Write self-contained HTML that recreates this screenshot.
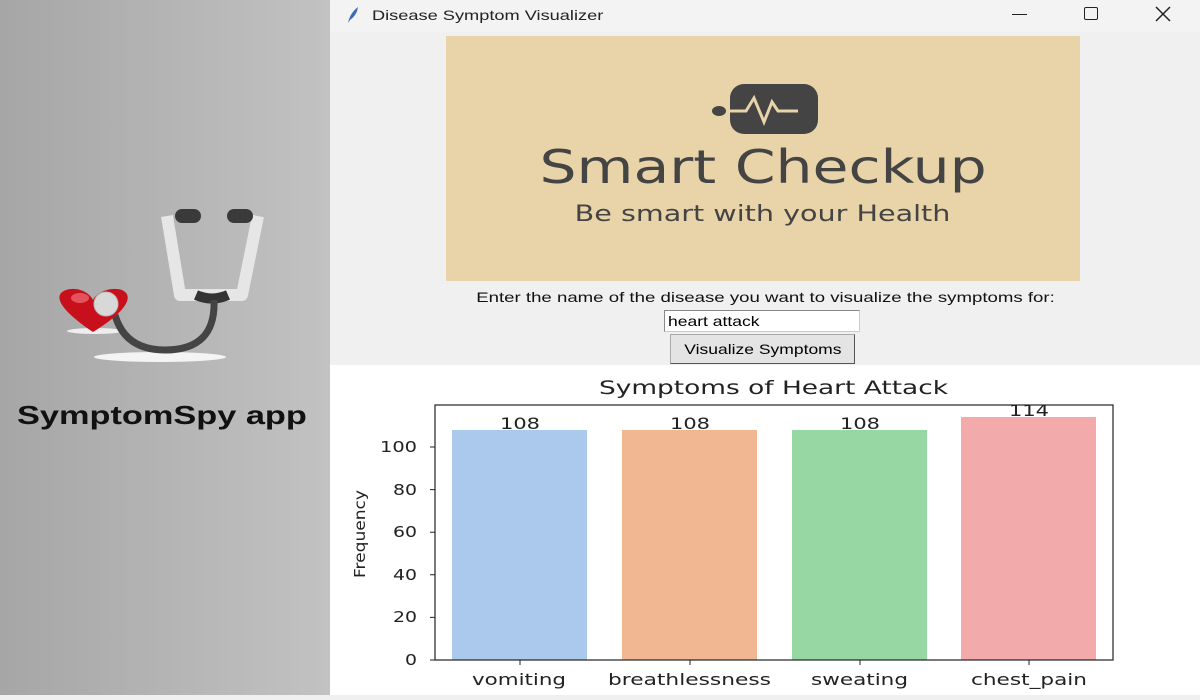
<!DOCTYPE html>
<html><head><meta charset="utf-8"><style>
*{margin:0;padding:0;box-sizing:border-box}
body{width:1200px;height:695px;overflow:hidden;position:relative;font-family:"Liberation Sans",sans-serif;background:#f0f0f0}
.left{position:absolute;left:0;top:0;width:330px;height:695px;background:linear-gradient(90deg,#a6a6a6,#c2c2c2)}
.title{position:absolute;left:330px;top:0;width:870px;height:32px;background:#f3f3f3;font-size:14px;color:#222}
.win{position:absolute;left:330px;top:32px;width:870px;height:333px;background:#f0f0f0}
.chart{position:absolute;left:330px;top:365px;width:870px;height:330px;background:#fff}
.sx{display:inline-block;transform-origin:left center}
.c{position:absolute;left:0;text-align:center}
.c span{display:inline-block;transform-origin:center}
</style></head><body>
<div class="left">
<svg width="330" height="440" style="position:absolute;left:0;top:0">
<ellipse cx="160" cy="357" rx="66" ry="5" fill="#f4f4f4"/>
<ellipse cx="95" cy="331" rx="28" ry="3" fill="#eee"/>
<path d="M167 216 L180 295 L242 295 L258 216" fill="none" stroke="#e6e6e6" stroke-width="12" stroke-linejoin="round"/>
<rect x="175" y="209" width="26" height="14" rx="7" fill="#3a3a3a"/>
<rect x="227" y="209" width="26" height="14" rx="7" fill="#3a3a3a"/>
<path d="M196 295 Q212 302 228 295" stroke="#333" stroke-width="10" fill="none"/>
<path d="M214 300 Q216 350 165 350 Q125 350 115 315" stroke="#444" stroke-width="7" fill="none"/>
<path d="M93 332 C60 310 52 295 66 290 C78 286 90 293 93 300 C96 293 110 286 122 290 C135 296 126 312 93 332Z" fill="#c8101c"/>
<ellipse cx="80" cy="298" rx="9" ry="5" fill="#f07078" opacity=".7"/>
<circle cx="106" cy="304" r="12" fill="#d8d8d8" stroke="#bbb"/>
</svg>
<div style="position:absolute;left:17px;top:400px;font-size:26px;font-weight:bold;color:#111"><span class="sx" style="transform:scaleX(1.32)">SymptomSpy app</span></div>
</div>
<div class="title">
<svg width="20" height="20" style="position:absolute;left:12px;top:5px"><path d="M6 18 Q8 8 16 2 Q15 10 8 15Z" fill="#3b6ab8"/></svg>
<span class="sx" style="position:absolute;left:42px;top:7px;transform:scaleX(1.3)">Disease Symptom Visualizer</span>
<div style="position:absolute;left:682px;top:14px;width:15px;height:1px;background:#222"></div>
<div style="position:absolute;left:754px;top:7px;width:14px;height:13px;border:1.5px solid #222;border-radius:2px"></div>
<svg width="16" height="16" style="position:absolute;left:825px;top:6px"><path d="M1 1L15 15M15 1L1 15" stroke="#222" stroke-width="1.5"/></svg>
</div>
<div class="win">
<div style="position:absolute;left:116px;top:4px;width:634px;height:245px;background:#e8d4a8">
<svg width="120" height="60" style="position:absolute;left:260px;top:42px">
<rect x="24" y="6" width="88" height="50" rx="14" fill="#444"/>
<ellipse cx="13" cy="33" rx="7" ry="5" fill="#444"/>
<path d="M20 33H40L48 20L58 44L66 24L72 33H92" stroke="#e8d4a8" stroke-width="3" fill="none"/>
</svg>
<div class="c" style="width:634px;top:104px;font-size:46px;color:#444;font-family:'DejaVu Sans',sans-serif"><span style="transform:scaleX(1.27)">Smart Checkup</span></div>
<div class="c" style="width:634px;top:166px;font-size:22px;color:#444;font-family:'DejaVu Sans',sans-serif"><span style="transform:scaleX(1.3)">Be smart with your Health</span></div>
</div>
<div class="c" style="width:870px;top:257px;font-size:14px;color:#111"><span style="transform:scaleX(1.33)">Enter the name of the disease you want to visualize the symptoms for:</span></div>
<div style="position:absolute;left:334px;top:278px;width:196px;height:22px;background:#fff;border:1px solid #ccc;border-top-color:#888;border-left-color:#888;font-size:14px;padding:2px 3px"><span class="sx" style="transform:scaleX(1.25)">heart attack</span></div>
<div class="c" style="left:340px;top:302px;width:185px;height:30px;background:#e4e4e4;border:1px solid #aaa;border-right-color:#555;border-bottom-color:#555;font-size:14px;line-height:28px"><span style="transform:scaleX(1.25)">Visualize Symptoms</span></div>
</div>
<div class="chart">
<svg width="870" height="330" style="font-family:'DejaVu Sans',sans-serif">
<g transform="translate(-330,-365)">
<text x="599" y="394" font-size="19" fill="#222" textLength="349" lengthAdjust="spacingAndGlyphs">Symptoms of Heart Attack</text>
<rect x="452" y="430" width="135" height="230" fill="#abc9ec"/>
<rect x="622" y="430" width="135" height="230" fill="#f0b792"/>
<rect x="792" y="430" width="135" height="230" fill="#97d7a3"/>
<rect x="961" y="417" width="135" height="243" fill="#f2aaaa"/>
<g font-size="16" fill="#222" lengthAdjust="spacingAndGlyphs">
<text x="500" y="429" textLength="40" lengthAdjust="spacingAndGlyphs">108</text>
<text x="670" y="429" textLength="40" lengthAdjust="spacingAndGlyphs">108</text>
<text x="840" y="429" textLength="40" lengthAdjust="spacingAndGlyphs">108</text>
<text x="1009" y="416" textLength="40" lengthAdjust="spacingAndGlyphs">114</text>
<text x="472" y="685" textLength="94" lengthAdjust="spacingAndGlyphs">vomiting</text>
<text x="608" y="685" textLength="163" lengthAdjust="spacingAndGlyphs">breathlessness</text>
<text x="811" y="685" textLength="97" lengthAdjust="spacingAndGlyphs">sweating</text>
<text x="971" y="685" textLength="116" lengthAdjust="spacingAndGlyphs">chest_pain</text>
</g>
<rect x="435" y="405" width="678" height="255" fill="none" stroke="#222" stroke-width="1.2"/>
<g font-size="15" fill="#222">
<text x="405" y="665" textLength="12" lengthAdjust="spacingAndGlyphs">0</text>
<text x="393" y="622" textLength="24" lengthAdjust="spacingAndGlyphs">20</text>
<text x="393" y="580" textLength="24" lengthAdjust="spacingAndGlyphs">40</text>
<text x="393" y="537" textLength="24" lengthAdjust="spacingAndGlyphs">60</text>
<text x="393" y="495" textLength="24" lengthAdjust="spacingAndGlyphs">80</text>
<text x="380" y="452" textLength="37" lengthAdjust="spacingAndGlyphs">100</text>
</g>
<g stroke="#222"><path d="M430 660H435M430 617.4H435M430 574.8H435M430 532.2H435M430 489.6H435M430 447H435M520 660V665M690 660V665M860 660V665M1029 660V665"/></g>
<text transform="translate(365,578) rotate(-90)" font-size="15" fill="#222" textLength="88" lengthAdjust="spacingAndGlyphs">Frequency</text>
</g></svg>
</div>
</body></html>
